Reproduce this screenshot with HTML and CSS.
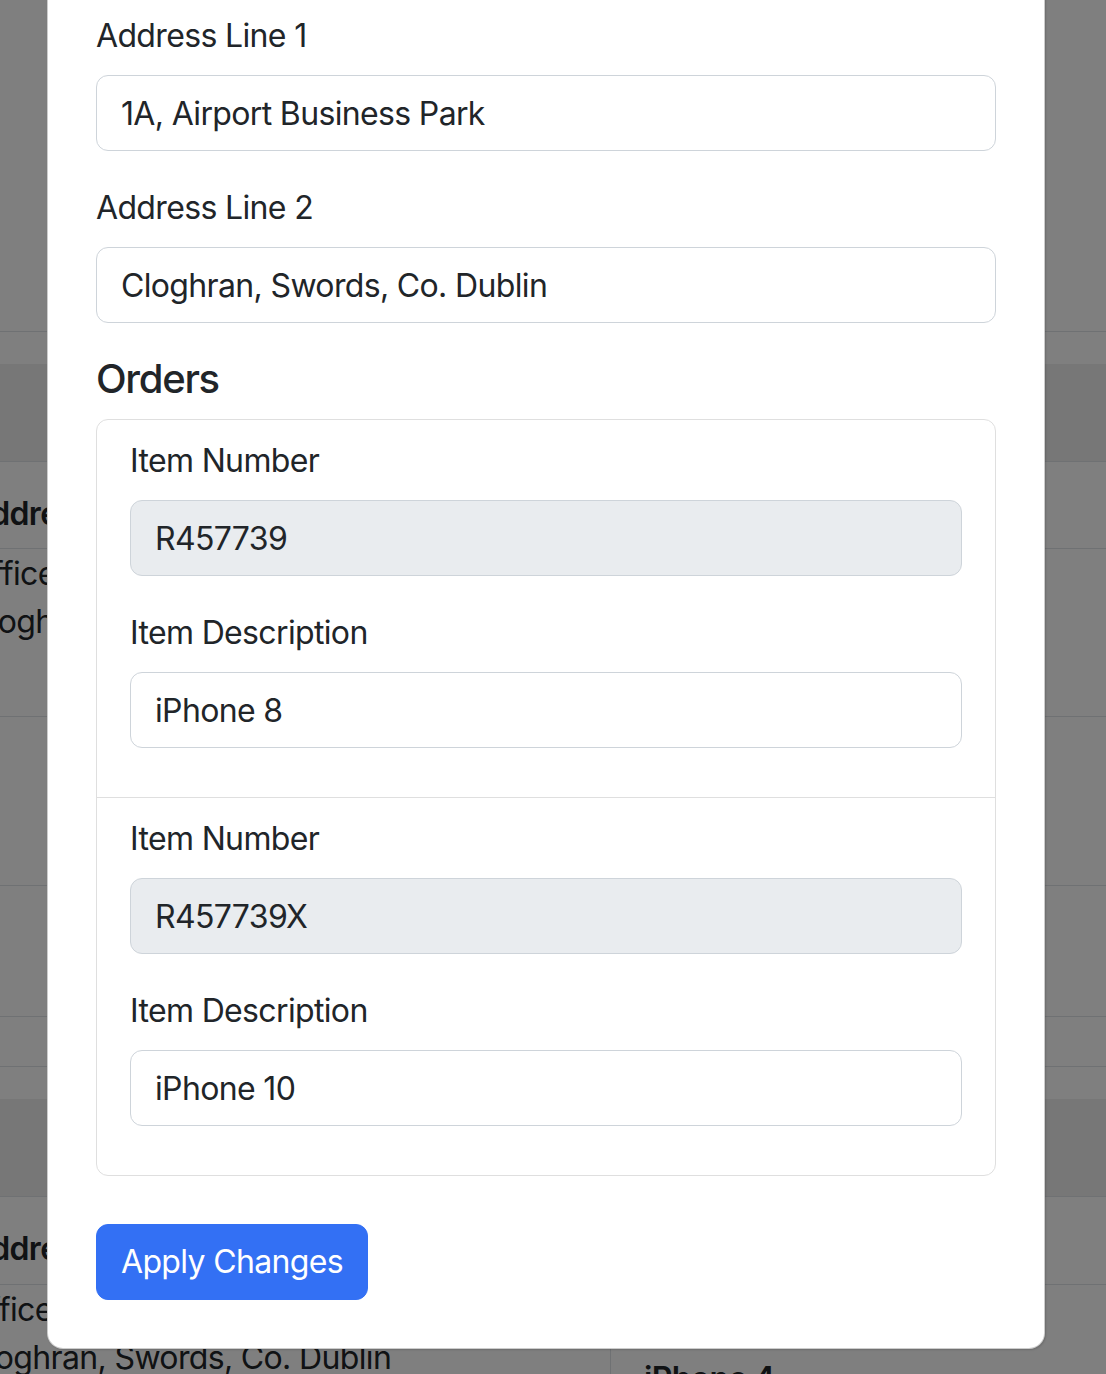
FILE: index.html
```html
<!DOCTYPE html>
<html lang="en">
<head>
<meta charset="utf-8">
<title>Edit Customer</title>
<link rel="stylesheet" href="styles.css">
</head>
<body>
<div class="page">
  <div class="row r-a"></div>
  <div class="row r-b"></div>
  <div class="row r-c shade"></div>
  <div class="row r-d"><div class="cell-text bold">Address</div></div>
  <div class="row r-e">
    <div class="cell-text">Office 12, Airport Business Park</div>
    <div class="cell-text">Cloghran, Swords, Co. Dublin</div>
  </div>
  <div class="row r-f"></div>
  <div class="row r-g"></div>
  <div class="row r-h"></div>
  <div class="row r-i"></div>
  <div class="row r-j shade"></div>
  <div class="row r-k"><div class="cell-text bold">Address</div></div>
  <div class="row r-l">
    <div class="cell-left">
      <div class="cell-text">Office 12, Airport Business Park</div>
      <div class="cell-text">Cloghran, Swords, Co. Dublin</div>
    </div>
    <div class="cell-right"><div class="bold">iPhone 4</div></div>
  </div>
</div>

<div class="backdrop"></div>

<div class="modal">
  <form class="modal-body">
    <div class="field">
      <label class="label" for="a1">Address Line 1</label>
      <input class="input" id="a1" type="text" value="1A, Airport Business Park">
    </div>
    <div class="field">
      <label class="label" for="a2">Address Line 2</label>
      <input class="input" id="a2" type="text" value="Cloghran, Swords, Co. Dublin">
    </div>
    <h5 class="heading">Orders</h5>
    <div class="card">
      <div class="card-item">
        <div class="field">
          <label class="label" for="n1">Item Number</label>
          <input class="input" id="n1" type="text" value="R457739" disabled>
        </div>
        <div class="field">
          <label class="label" for="d1">Item Description</label>
          <input class="input" id="d1" type="text" value="iPhone 8">
        </div>
      </div>
      <div class="card-item">
        <div class="field">
          <label class="label" for="n2">Item Number</label>
          <input class="input" id="n2" type="text" value="R457739X" disabled>
        </div>
        <div class="field">
          <label class="label" for="d2">Item Description</label>
          <input class="input" id="d2" type="text" value="iPhone 10">
        </div>
      </div>
    </div>
    <button class="btn" type="button">Apply Changes</button>
  </form>
</div>
</body>
</html>
```
FILE: styles.css
```css
* { box-sizing: border-box; }

html, body {
  margin: 0;
  padding: 0;
}

body {
  width: 1106px;
  height: 1374px;
  overflow: hidden;
  position: relative;
  background: #ffffff;
  color: #212529;
  font-family: Inter, "Noto Sans", "Liberation Sans", sans-serif;
  font-size: 32px;
  line-height: 48px;
  letter-spacing: -0.65px;
}

/* ---------- background page ---------- */
.page {
  width: 1106px;
}

.row {
  border-bottom: 1px solid #dee2e6;
  overflow: hidden;
}

.shade { background: #eeeeee; }

.r-a { height: 332px; }
.r-b { height: 32px; border-bottom: 0; }
.r-c { height: 98px; }
.r-d { height: 87px; padding-top: 28px; }
.r-e { height: 168px; padding-top: 1px; }
.r-f { height: 169px; }
.r-g { height: 131px; }
.r-h { height: 50px; }
.r-i { height: 32px; border-bottom: 0; }
.r-j { height: 98px; }
.r-k { height: 88px; padding-top: 28px; }
.r-l {
  height: 200px;
  border-bottom: 0;
  display: grid;
  grid-template-columns: 611px 1fr;
}

.r-l .cell-left { padding-top: 1px; }

.cell-text {
  margin-left: -32px;
  white-space: nowrap;
}

.r-l .cell-text { margin-left: -35px; }

.cell-left {
  border-right: 1px solid #dee2e6;
}

.cell-right {
  padding: 70px 0 0 33px;
}

.bold { font-weight: 600; }

.backdrop {
  position: absolute;
  inset: 0;
  background: rgba(0, 0, 0, 0.5);
}

/* ---------- modal ---------- */
.modal {
  position: absolute;
  left: 47px;
  top: -38px;
  width: 998px;
  background: #ffffff;
  border: 1px solid rgba(0, 0, 0, 0.2);
  border-radius: 16px;
  box-shadow: 1px 1px 2px rgba(0, 0, 0, 0.15);
}

.modal-body {
  padding: 48px 48px 48px;
  margin: 0;
}

.field {
  margin-bottom: 32px;
}

.label {
  display: block;
  margin-bottom: 16px;
  padding-top: 1px;
  height: 48px;
  font-size: 32px;
  line-height: 48px;
  color: #212529;
}

.input {
  display: block;
  width: 100%;
  height: 76px;
  margin: 0;
  padding: 0 24px;
  font-family: inherit;
  font-size: 32px;
  letter-spacing: -0.65px;
  color: #212529;
  background: #ffffff;
  border: 1px solid #ced4da;
  border-radius: 12px;
  outline: none;
}

.input:disabled {
  background: #e9ecef;
  color: #212529;
  opacity: 1;
  -webkit-text-fill-color: #212529;
}

.heading {
  margin: 0 0 16px;
  font-size: 40px;
  line-height: 48px;
  font-weight: 500;
  letter-spacing: -1.3px;
  color: #212529;
}

.card {
  border: 1px solid #dfdfdf;
  border-radius: 12px;
  margin-bottom: 48px;
}

.card-item {
  padding: 16px 33px 17px;
}

.card-item + .card-item {
  border-top: 1px solid #dfdfdf;
}

.btn {
  display: block;
  height: 76px;
  padding: 0 24px;
  font-family: inherit;
  font-size: 32px;
  line-height: 48px;
  letter-spacing: -0.65px;
  color: #ffffff;
  background: #3370f4;
  border: 1px solid #3370f4;
  border-radius: 12px;
}
```
